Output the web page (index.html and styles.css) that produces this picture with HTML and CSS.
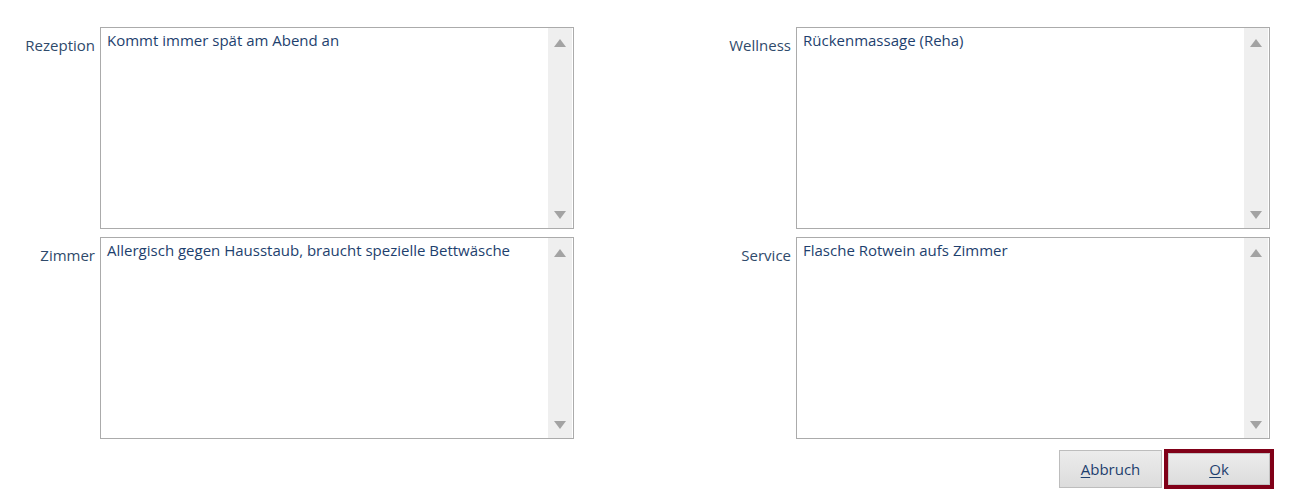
FILE: index.html
```html
<!DOCTYPE html>
<html lang="de">
<head>
<meta charset="utf-8">
<title>Notizen</title>
<link rel="stylesheet" href="styles.css">
</head>
<body>
<div class="form">
  <div class="grid">
    <label class="lbl">Rezeption</label>
    <div class="memo"><div class="memo-text">Kommt immer spät am Abend an</div><div class="sb"><span class="arr up"></span><span class="arr down"></span></div></div>
    <label class="lbl">Wellness</label>
    <div class="memo"><div class="memo-text">Rückenmassage (Reha)</div><div class="sb"><span class="arr up"></span><span class="arr down"></span></div></div>
    <label class="lbl">Zimmer</label>
    <div class="memo"><div class="memo-text">Allergisch gegen Hausstaub, braucht spezielle Bettwäsche</div><div class="sb"><span class="arr up"></span><span class="arr down"></span></div></div>
    <label class="lbl">Service</label>
    <div class="memo"><div class="memo-text">Flasche Rotwein aufs Zimmer</div><div class="sb"><span class="arr up"></span><span class="arr down"></span></div></div>
  </div>
  <div class="buttons">
    <button class="btn"><u>A</u>bbruch</button>
    <button class="btn btn-default"><u>O</u>k</button>
  </div>
</div>
</body>
</html>
```
FILE: styles.css
```css
html, body {
  margin: 0;
  padding: 0;
  background: #ffffff;
}
body {
  font-family: "Open Sans", "Noto Sans", sans-serif;
  font-size: 15px;
  color: #1e3f6e;
}
.form {
  padding-top: 27px;
  width: 1292px;
}
.grid {
  display: grid;
  grid-template-columns: 95px 474px 212px 474px;
  grid-template-rows: 202px 202px;
  column-gap: 5px;
  row-gap: 8px;
}
.lbl {
  text-align: right;
  padding-top: 8px;
  color: #2f4a6b;
  line-height: 21px;
}
.memo {
  display: flex;
  border: 1px solid #ababab;
  background: #fff;
  box-sizing: border-box;
  height: 202px;
}
.memo-text {
  flex: 1;
  padding: 2px 6px;
  line-height: 21px;
}
.sb {
  width: 24px;
  margin-right: 1px;
  background: #efefef;
  display: flex;
  flex-direction: column;
  align-items: center;
  justify-content: space-between;
  padding: 11px 0 9px;
}
.arr {
  width: 0;
  height: 0;
  border-left: 6px solid transparent;
  border-right: 6px solid transparent;
}
.arr.up {
  border-bottom: 8px solid #a3a3a3;
}
.arr.down {
  border-top: 8px solid #a3a3a3;
}
.buttons {
  display: flex;
  justify-content: flex-end;
  align-items: center;
  gap: 2px;
  padding-right: 18px;
  margin-top: 10px;
}
.btn {
  font-family: inherit;
  font-size: 15px;
  color: #1e3f6e;
  height: 38px;
  width: 103px;
  border: 1px solid #bdbdbd;
  background: linear-gradient(#ececec, #dcdcdc);
  padding: 0;
  margin: 0;
}
.btn u {
  text-decoration-thickness: 1px;
  text-underline-offset: 2px;
}
.btn-default {
  width: 110px;
  height: 40px;
  border: 4px solid #800018;
  box-shadow: inset 0 0 0 1px #c4c4c4;
}
```
